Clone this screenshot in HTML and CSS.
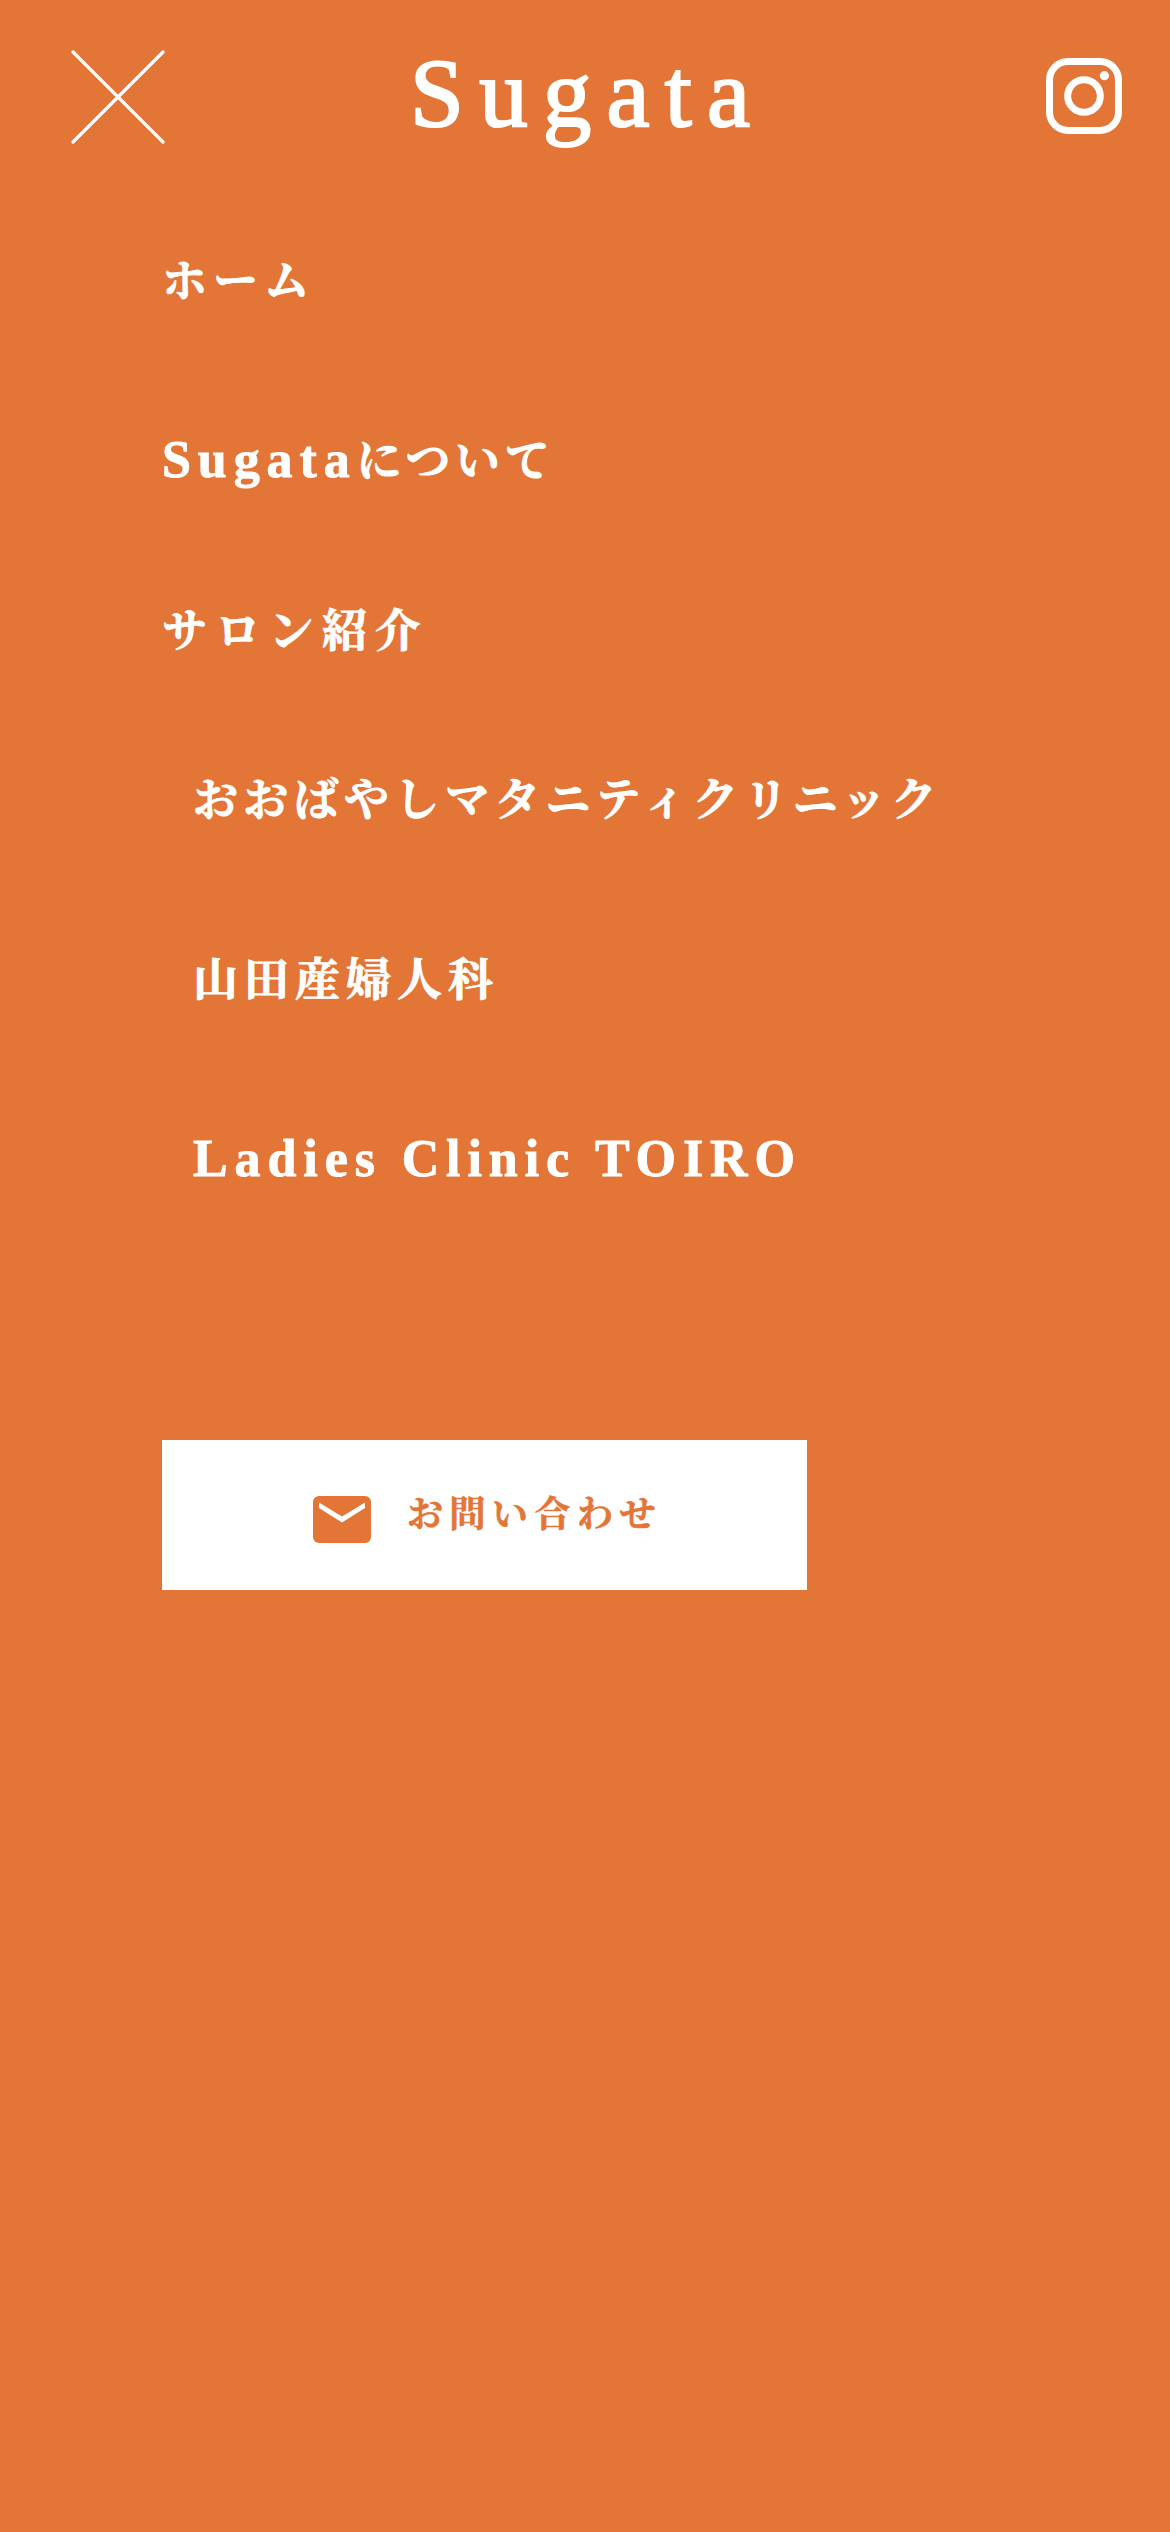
FILE: index.html
```html
<!DOCTYPE html>
<html lang="ja">
<head>
<meta charset="utf-8">
<title>Sugata</title>
<link rel="stylesheet" href="styles.css">
</head>
<body>
<header class="header">
  <button class="close" aria-label="閉じる">
    <svg width="94" height="94" viewBox="0 0 94 94" fill="none" stroke="#fff" stroke-width="3.2" stroke-linecap="round"><path d="M2 2 92 92M92 2 2 92"/></svg>
  </button>
  <div class="logo">Sugata</div>
  <a class="instagram" aria-label="Instagram">
    <svg width="76" height="76" viewBox="0 0 76 76" fill="none" stroke="#fff" stroke-width="7"><rect x="3.5" y="3.5" width="69" height="69" rx="18.5"/><circle cx="38" cy="38" r="16.3"/><circle cx="58.4" cy="17.7" r="4.6" fill="#fff" stroke="none"/></svg>
  </a>
</header>
<nav class="menu">
  <a class="item">ホーム</a>
  <a class="item item-about"><span class="latin">Sugata</span>について</a>
  <a class="item item-salon">サロン紹介</a>
  <div class="submenu">
    <a class="item item-long">おおばやしマタニティクリニック</a>
    <a class="item">山田産婦人科</a>
    <a class="item"><span class="latin">Ladies Clinic TOIRO</span></a>
  </div>
</nav>
<a class="contact">
  <svg class="mail" width="58" height="47" viewBox="0 0 58 47"><rect width="58" height="47" rx="6" fill="#e37536"/><path d="M6 6.5 29 20.5 52 6.5V12L29 26.5 6 12Z" fill="#fff"/></svg>
  <span class="contact-label">お問い合わせ</span>
</a>
</body>
</html>
```
FILE: styles.css
```css
* { box-sizing: border-box; }
body {
  margin: 0;
  min-height: 2532px;
  background: #e37536;
  color: #fff;
  font-family: "Noto Serif CJK JP", "Noto Sans CJK JP", serif;
  font-weight: 700;
}
.header {
  display: flex;
  align-items: center;
  height: 194px;
  padding: 0 48px 0 71px;
}
.close { display: flex; padding: 0; border: 0; background: none; }
.instagram { display: flex; margin: 0 0 2px auto; }
.logo {
  margin-left: 245px;
  padding-bottom: 6px;
  font: 400 97px/120px "Liberation Serif", serif;
  letter-spacing: 15.2px;
  -webkit-text-stroke: 2.2px #fff;
}
.menu {
  display: flex;
  flex-direction: column;
  padding: 0 0 0 162px;
  -webkit-text-stroke: 0.9px #fff;
}
.item {
  display: block;
  height: 180px;
  font-size: 45px;
  line-height: 168px;
  letter-spacing: 6px;
  white-space: nowrap;
}
.item-about { height: 170px; letter-spacing: 4.7px; }
.item-salon { height: 169px; letter-spacing: 8.3px; }
.item-long { letter-spacing: 5.35px; }
.submenu { padding-left: 31px; }
.latin {
  font-family: "Liberation Serif", serif;
  font-size: 52px;
  line-height: 1;
  letter-spacing: 6.9px;
}
.contact {
  display: flex;
  align-items: center;
  width: 645px;
  height: 150px;
  margin: 187px 0 0 162px;
  padding-left: 151px;
  gap: 36px;
  background: #fff;
  color: #e37536;
}
.mail { margin-top: 9px; }
.contact-label {
  font-size: 36px;
  line-height: 1;
  letter-spacing: 6.5px;
  margin-top: -6px;
  -webkit-text-stroke: 0.6px #e37536;
}
```
